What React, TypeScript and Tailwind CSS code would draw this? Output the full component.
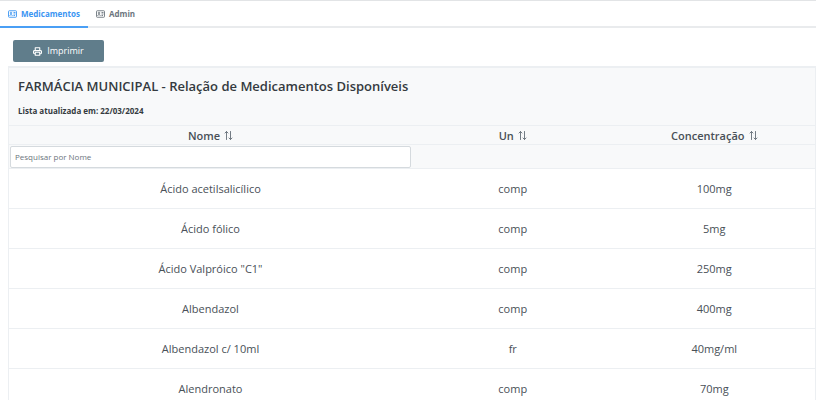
import React from "react";

type Medicine = { name: string; unit: string; dose: string };

const medicines: Medicine[] = [
  { name: "Ácido acetilsalicílico", unit: "comp", dose: "100mg" },
  { name: "Ácido fólico", unit: "comp", dose: "5mg" },
  { name: 'Ácido Valpróico "C1"', unit: "comp", dose: "250mg" },
  { name: "Albendazol", unit: "comp", dose: "400mg" },
  { name: "Albendazol c/ 10ml", unit: "fr", dose: "40mg/ml" },
  { name: "Alendronato", unit: "comp", dose: "70mg" },
];

function IdCardIcon() {
  return (
    <svg aria-hidden="true" className="h-2 w-[9px]" viewBox="0 0 18 16" fill="none" stroke="currentColor" strokeWidth="1.8">
      <rect x="1" y="1.5" width="16" height="13" rx="1.5" />
      <circle cx="6" cy="6" r="1.6" />
      <path d="M3.2 11.5c0-3 5.6-3 5.6 0M11 5h4M11 8h4M11 11h3" />
    </svg>
  );
}

function PrintIcon() {
  return (
    <svg aria-hidden="true" className="size-[9px]" viewBox="0 0 20 20" fill="none" stroke="currentColor" strokeWidth="2.4" strokeLinejoin="round">
      <path d="M5 8V1.5h10V8M5 15H3.5C2 15 1.2 14 1.2 12.8V10C1.2 8.8 2 8 3.5 8h13c1.5 0 2.3.8 2.3 2v2.8c0 1.2-.8 2.2-2.3 2.2H15" />
      <path d="M5 11.5h10v7H5z" />
    </svg>
  );
}

function SortIcon() {
  return (
    <svg aria-hidden="true" className="h-[9px] w-[9px] text-[#6c757d]" viewBox="0 0 18 18" fill="none" stroke="currentColor" strokeWidth="1.9" strokeLinecap="round" strokeLinejoin="round">
      <path d="M5 17V1M2 4 5 1l3 3M13 1v16M10 14l3 3 3-3" />
    </svg>
  );
}

function HeaderCell({ label }: { label: string }) {
  return (
    <th scope="col" className="h-5 border-b border-[#eceff2] p-0 font-semibold">
      <button type="button" className="inline-flex items-center gap-1 align-middle text-[11px] leading-4">
        {label}
        <SortIcon />
      </button>
    </th>
  );
}

export default function App() {
  return (
    <div className="h-screen overflow-hidden bg-white font-['Open_Sans','Noto_Sans',sans-serif] text-[11px] leading-4 text-[#495057]">
      <nav className="flex h-7 border-t border-b-2 border-t-[#e2e4e6] border-b-[#e9ebed] text-[8px] font-bold">
        <a href="#medicamentos" aria-current="page" className="-mb-0.5 flex items-center gap-1 border-b-2 border-[#4a9ff5] px-2 text-[#3b95f2]">
          <IdCardIcon />
          Medicamentos
        </a>
        <a href="#admin" className="flex items-center gap-1 px-2 text-[#6c757d]">
          <IdCardIcon />
          Admin
        </a>
      </nav>

      <main className="pt-3 pl-2">
        <button type="button" className="ml-[5px] flex h-[22px] w-[91px] items-center justify-center gap-[5px] rounded-xs bg-[#607d8b] text-[9px] font-medium text-white">
          <PrintIcon />
          Imprimir
        </button>

        <section className="mt-1 border-t-2 border-r border-l border-[#eceff2]">
          <header className="bg-[#f8f9fa] px-[9px] pt-2 pb-[6px] text-[#343a40]">
            <h1 className="text-[13px] leading-5 font-semibold">FARMÁCIA MUNICIPAL - Relação de Medicamentos Disponíveis</h1>
            <p className="mt-[7px] text-[8px] leading-4 font-bold">Lista atualizada em: 22/03/2024</p>
          </header>

          <table className="w-full table-fixed border-separate border-spacing-0 text-center">
            <colgroup>
              <col className="w-1/2" />
              <col className="w-1/4" />
              <col className="w-1/4" />
            </colgroup>
            <thead className="bg-[#f8f9fa]">
              <tr className="[&>th]:border-t">
                <HeaderCell label="Nome" />
                <HeaderCell label="Un" />
                <HeaderCell label="Concentração" />
              </tr>
              <tr className="h-6 [&>td]:border-b [&>td]:border-[#eceff2]">
                <td className="px-px py-0">
                  <input type="text" aria-label="Pesquisar por Nome" placeholder="Pesquisar por Nome" className="block h-[22px] w-full rounded-xs border border-[#d5dade] bg-white px-1 text-[8px] placeholder:text-[#6c757d]" />
                </td>
                <td />
                <td />
              </tr>
            </thead>
            <tbody>
              {medicines.map((item) => (
                <tr key={item.name} className="h-10 [&>td]:border-b [&>td]:border-[#eceff2] [&>td]:p-0">
                  <td>{item.name}</td>
                  <td>{item.unit}</td>
                  <td>{item.dose}</td>
                </tr>
              ))}
            </tbody>
          </table>
        </section>
      </main>
    </div>
  );
}
